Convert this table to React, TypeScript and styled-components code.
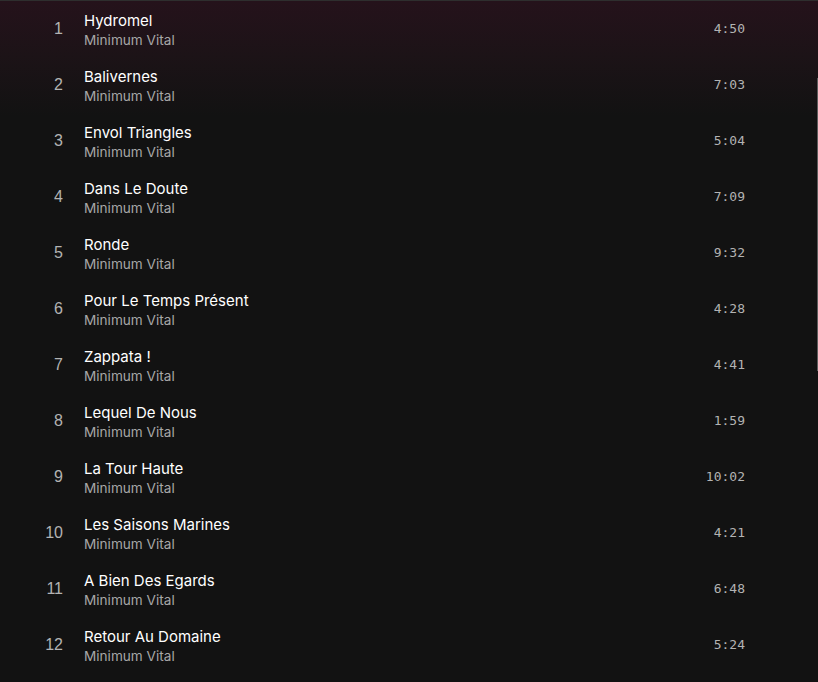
import styled, { createGlobalStyle } from 'styled-components';

const GlobalStyle = createGlobalStyle`
  html, body {
    margin: 0;
    padding: 0;
    background: #121212;
  }
`;

const Page = styled.div`
  position: relative;
  width: 818px;
  height: 682px;
  overflow: hidden;
  box-sizing: border-box;
  border-top: 1px solid #2e2e2e;
  background: linear-gradient(180deg, #25121b 0px, #1c1317 55px, #121212 115px, #121212 100%);
`;

const TrackList = styled.div`
  display: flex;
  flex-direction: column;
`;

const TrackRow = styled.div`
  display: grid;
  grid-template-columns: 63px 1fr auto;
  column-gap: 21px;
  align-items: center;
  height: 56px;
  padding-right: 73px;
`;

const TrackNumber = styled.div`
  text-align: right;
  font-family: 'Liberation Sans', Arial, sans-serif;
  font-size: 16px;
  color: #b3b3b3;
`;

const TrackInfo = styled.div`
  display: flex;
  flex-direction: column;
  gap: 1px;
  padding-top: 2px;
`;

const TrackTitle = styled.div`
  font-family: Inter, 'Noto Sans', sans-serif;
  font-size: 15px;
  line-height: 19px;
  color: #ffffff;
`;

const TrackArtist = styled.div`
  font-family: Inter, 'Noto Sans', sans-serif;
  font-size: 13.6px;
  line-height: 18px;
  color: #a7a7a7;
`;

const TrackDuration = styled.div`
  font-family: 'DejaVu Sans Mono', monospace;
  font-size: 13px;
  padding-bottom: 2px;
  color: #b3b3b3;
`;

const ScrollThumb = styled.div`
  position: absolute;
  right: 0;
  top: 77px;
  width: 1px;
  height: 293px;
  background: #5c5c5c;
`;

const tracks = [
  ['Hydromel', '4:50'],
  ['Balivernes', '7:03'],
  ['Envol Triangles', '5:04'],
  ['Dans Le Doute', '7:09'],
  ['Ronde', '9:32'],
  ['Pour Le Temps Présent', '4:28'],
  ['Zappata !', '4:41'],
  ['Lequel De Nous', '1:59'],
  ['La Tour Haute', '10:02'],
  ['Les Saisons Marines', '4:21'],
  ['A Bien Des Egards', '6:48'],
  ['Retour Au Domaine', '5:24'],
];

const App = () => {
  return (
    <>
      <GlobalStyle />
      <Page>
        <TrackList>
          {tracks.map((t, i) => (
            <TrackRow key={i}>
              <TrackNumber>{i + 1}</TrackNumber>
              <TrackInfo>
                <TrackTitle>{t[0]}</TrackTitle>
                <TrackArtist>Minimum Vital</TrackArtist>
              </TrackInfo>
              <TrackDuration>{t[1]}</TrackDuration>
            </TrackRow>
          ))}
        </TrackList>
        <ScrollThumb />
      </Page>
    </>
  );
};

export default App;
